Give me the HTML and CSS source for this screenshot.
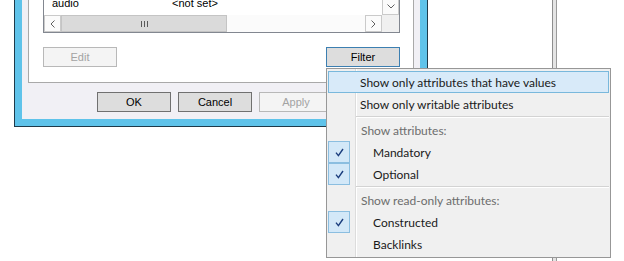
FILE: index.html
```html
<!DOCTYPE html>
<html lang="en">
<head>
    <meta charset="UTF-8">
    <title>Attribute Editor - Filter</title>
    <link rel="stylesheet" href="styles.css">
</head>
<body>
    <div class="backwin"></div>

    <div class="dialog">
        <div class="client">
            <div class="tabpage">
                <div class="list">
                    <div class="rows">
                        <div class="row"><span class="col-name">audio</span><span>&lt;not set&gt;</span></div>
                    </div>
                    <div class="vscroll">
                        <div class="sbtn">
                            <svg width="8" height="5" viewBox="0 0 8 5"><polyline points="0.5,0.5 4,4 7.5,0.5" fill="none" stroke="#606060" stroke-width="1"/></svg>
                        </div>
                    </div>
                    <div class="hscroll">
                        <div class="sbtn">
                            <svg width="5" height="8" viewBox="0 0 5 8"><polyline points="4.5,0.5 1,4 4.5,7.5" fill="none" stroke="#606060" stroke-width="1"/></svg>
                        </div>
                        <div class="thumb">
                            <svg width="7" height="6" viewBox="0 0 7 6"><rect x="0" y="0" width="1" height="6" fill="#5a5a5a"/><rect x="3" y="0" width="1" height="6" fill="#5a5a5a"/><rect x="6" y="0" width="1" height="6" fill="#5a5a5a"/></svg>
                        </div>
                        <div class="htrack"></div>
                        <div class="sbtn">
                            <svg width="5" height="8" viewBox="0 0 5 8"><polyline points="0.5,0.5 4,4 0.5,7.5" fill="none" stroke="#606060" stroke-width="1"/></svg>
                        </div>
                    </div>
                    <div class="corner"></div>
                </div>
                <div class="tab-actions">
                    <button class="btn" disabled>Edit</button>
                    <button class="btn focused">Filter</button>
                </div>
            </div>
            <div class="dialog-buttons">
                <button class="btn">OK</button>
                <button class="btn">Cancel</button>
                <button class="btn" disabled>Apply</button>
                <button class="btn">Help</button>
            </div>
        </div>
    </div>

    <div class="menu">
        <div class="item hot">Show only attributes that have values</div>
        <div class="item">Show only writable attributes</div>
        <div class="sep"></div>
        <div class="item header">Show attributes:</div>
        <div class="item checkable"><span class="check-slot"><span class="check"><svg width="9" height="9" viewBox="0 0 9 9"><path d="M1 4.6 L3.4 7.6 L8 1" fill="none" stroke="#1b3d7d" stroke-width="1.4"/></svg></span></span><span>Mandatory</span></div>
        <div class="item checkable"><span class="check-slot"><span class="check"><svg width="9" height="9" viewBox="0 0 9 9"><path d="M1 4.6 L3.4 7.6 L8 1" fill="none" stroke="#1b3d7d" stroke-width="1.4"/></svg></span></span><span>Optional</span></div>
        <div class="sep"></div>
        <div class="item header">Show read-only attributes:</div>
        <div class="item checkable"><span class="check-slot"><span class="check"><svg width="9" height="9" viewBox="0 0 9 9"><path d="M1 4.6 L3.4 7.6 L8 1" fill="none" stroke="#1b3d7d" stroke-width="1.4"/></svg></span></span><span>Constructed</span></div>
        <div class="item checkable"><span class="check-slot"></span><span>Backlinks</span></div>
    </div>
</body>
</html>
```

FILE: styles.css
```css
* { margin: 0; padding: 0; box-sizing: border-box; }
body { width: 624px; height: 261px; overflow: hidden; position: relative; background: #fff; font-family: 'Liberation Sans', Arial, sans-serif; font-size: 11px; color: #000; }

/* window behind the dialog */
.backwin { position: absolute; left: 552px; top: 0; width: 5px; height: 261px; background: #e4e4e4; border-left: 1px solid #8e8e8e; border-right: 1px solid #9a9a9a; }

/* properties dialog, only its lower part is on screen */
.dialog { position: absolute; left: 14px; bottom: 134px; width: 414px; background: #5fc3ea; border: 1px solid #1e3a4a; border-top: none; padding: 0 7px 7px; }
.client { background: #f1f0f5; padding: 0 6px; }
.tabpage { background: #fff; border: 1px solid #a9a9a9; border-top: none; padding: 0 13px 15px 14px; }

.list { display: grid; grid-template-columns: 1fr 17px; grid-template-rows: auto 17px; background: #fff; border: 1px solid #828790; border-top: none; }
.rows { padding: 60px 0 3px; }
.row { display: flex; height: 17px; line-height: 17px; padding-left: 8px; white-space: nowrap; }
.col-name { width: 120px; overflow: hidden; }
.vscroll { display: flex; flex-direction: column; justify-content: flex-end; background: #f0f0f0; }
.sbtn { width: 17px; height: 17px; display: flex; align-items: center; justify-content: center; background: #fbfbfb; border: 1px solid #cacaca; }
.hscroll { display: flex; background: #fbfbfb; }
.thumb { width: 166px; display: flex; align-items: center; justify-content: center; background: #dadada; border: 1px solid #c4c4c4; }
.htrack { flex: 1; }
.corner { background: #f0f0f0; }

.tab-actions { display: flex; justify-content: space-between; margin-top: 14px; }
.dialog-buttons { display: flex; justify-content: flex-end; gap: 7px; padding: 9px 0 7px; }
.btn { width: 74px; height: 20px; font-family: 'Liberation Sans', Arial, sans-serif; font-size: 11px; color: #000; background: #dddddd; border: 1px solid #707070; }
.btn:disabled { color: #a3a3a3; background: #f4f4f4; border-color: #b8b8b8; }
.btn.focused { border-color: #3c7fb1; }

/* context menu of the Filter button */
.menu { position: absolute; left: 326px; top: 68px; width: 285px; padding: 2px 1px; border: 1px solid #979797; font-family: Lato, 'Open Sans', sans-serif; font-size: 12px; color: #1a1a1a;
    background: linear-gradient(to right, transparent 28px, #dcdcdc 28px, #dcdcdc 29px, #fff 29px, #fff 30px, transparent 30px), #f0f0f0; }
.item { display: flex; align-items: center; height: 22px; padding-left: 32px; white-space: nowrap; }
.item.hot { background: #d8eaf9; box-shadow: inset 0 0 0 1px #79b8dc; }
.item.header { color: #6d6d6d; padding-left: 33px; }
.item.checkable { padding-left: 0; }
.check-slot { flex: none; width: 45px; height: 22px; }
.check { display: flex; align-items: center; justify-content: center; width: 22px; height: 22px; background: #d3e8f8; border: 1px solid #8bbee0; }
.sep { height: 4px; margin-left: 28px; padding-top: 1px; }
.sep::after { content: ''; display: block; height: 1px; background: #d3d3d3; border-bottom: 1px solid #fff; box-sizing: content-box; }
```
